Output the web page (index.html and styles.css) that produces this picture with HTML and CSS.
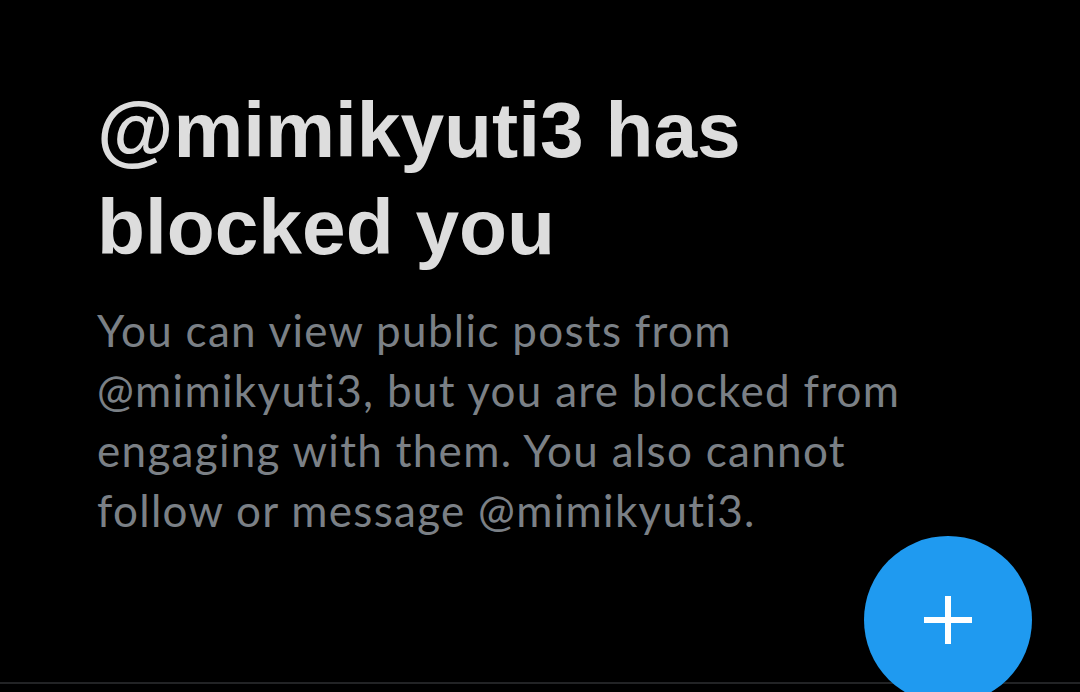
FILE: index.html
```html
<!DOCTYPE html>
<html lang="en">
<head>
<meta charset="utf-8">
<title>Blocked</title>
<link rel="stylesheet" href="styles.css">
</head>
<body>
<div class="page">
  <main class="content">
    <h1 class="title">@mimikyuti3 has blocked you</h1>
    <p class="desc">You can view public posts from @mimikyuti3, but you are blocked from engaging with them. You also cannot follow or message @mimikyuti3.</p>
  </main>
  <div class="bottom-line"></div>
  <button class="fab" aria-label="New post">
    <svg viewBox="0 0 48 48" width="48" height="48"><path d="M24 0v48M0 24h48" stroke="#fff" stroke-width="6" fill="none"/></svg>
  </button>
</div>
</body>
</html>
```
FILE: styles.css
```css
html, body {
  margin: 0;
  padding: 0;
  background: #000;
}
.page {
  position: relative;
  width: 1080px;
  height: 692px;
  overflow: hidden;
  display: flex;
  flex-direction: column;
}
.content {
  flex: 1;
  padding: 82px 0 0 97px;
  width: 840px;
}
.title {
  margin: 0;
  font-family: "Liberation Sans", Arial, sans-serif;
  font-weight: 700;
  font-size: 78.5px;
  line-height: 97px;
  color: #dddddd;
  width: 700px;
}
.desc {
  margin: 24px 0 0;
  font-family: Lato, "Noto Sans", sans-serif;
  font-size: 44px;
  line-height: 60px;
  letter-spacing: 1.3px;
  color: #7b8086;
}
.bottom-line {
  height: 2px;
  background: #222325;
  margin-bottom: 8px;
}
.fab {
  position: absolute;
  left: 864px;
  top: 536px;
  width: 168px;
  height: 168px;
  border-radius: 50%;
  border: none;
  padding: 0;
  background: #1f9af0;
  display: flex;
  align-items: center;
  justify-content: center;
}
.fab svg { display: block; }
```
